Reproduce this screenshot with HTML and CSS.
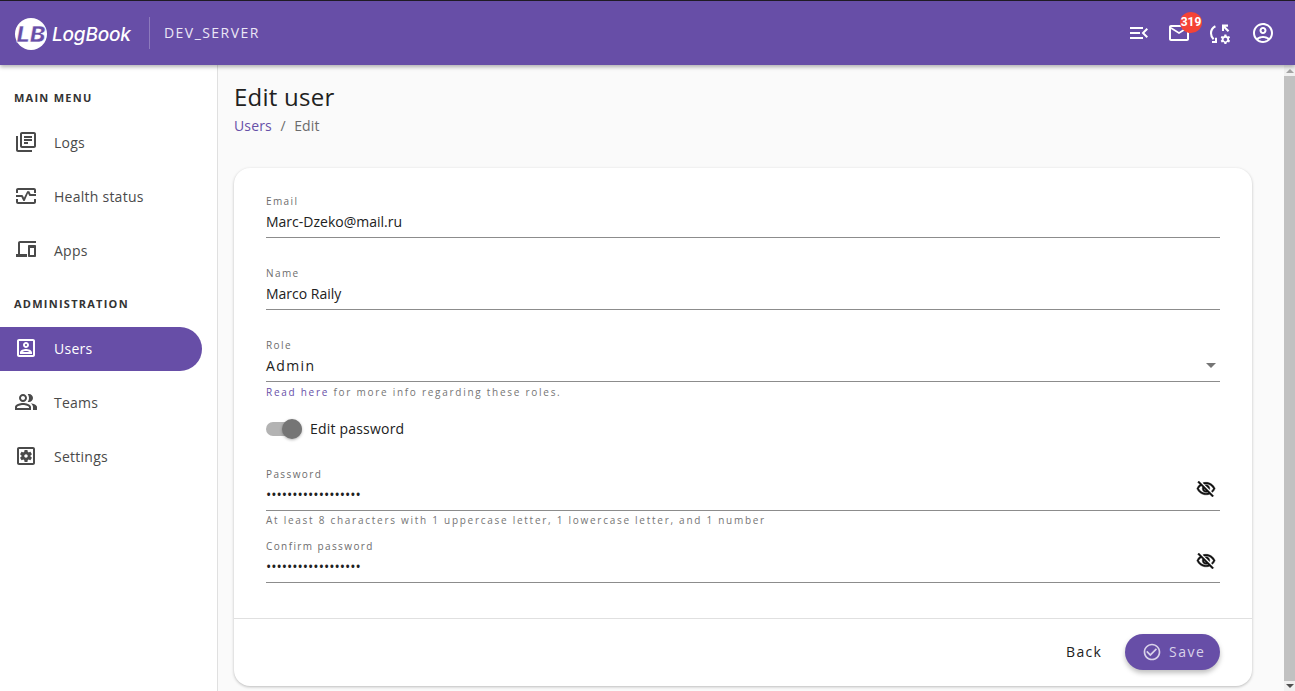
FILE: index.html
```html
<!DOCTYPE html>
<html lang="en">
<head>
    <meta charset="UTF-8">
    <meta name="viewport" content="width=device-width, initial-scale=1.0">
    <title>LogBook - Edit user</title>
    <link rel="stylesheet" href="styles.css">
</head>
<body>
    <header class="topbar">
        <div class="brand">
            <svg class="brand-mark" viewBox="0 0 36 36" width="36" height="36">
                <circle cx="18" cy="18" r="16" fill="#fff"/>
                <text x="18" y="26" class="brand-letters" textLength="29" lengthAdjust="spacingAndGlyphs">LB</text>
            </svg>
            <span class="brand-name">LogBook</span>
        </div>
        <div class="server">DEV_SERVER</div>
        <div class="topbar-actions">
            <button class="icon-btn">
                <svg class="icon" viewBox="0 0 24 24"><path d="M3 18h13v-2H3v2zm0-5h10v-2H3v2zm0-7v2h13V6H3zm18 9.59L17.42 12 21 8.41 19.59 7l-5 5 5 5L21 15.59z"/></svg>
            </button>
            <button class="icon-btn">
                <svg class="icon" viewBox="0 0 24 24"><path d="M20 4H4c-1.1 0-1.99.9-1.99 2L2 18c0 1.1.9 2 2 2h16c1.1 0 2-.9 2-2V6c0-1.1-.9-2-2-2zm0 14H4V8l8 5 8-5v10zm-8-7L4 6h16l-8 5z"/></svg>
                <span class="badge">319</span>
            </button>
            <button class="icon-btn icon-btn-sync">
                <svg class="icon" viewBox="0 0 24 24">
                    <path d="M7.4 5.2C4.6 6.6 3 9 3 12.2c0 2.4 1 4.5 2.6 6" fill="none" stroke="#fff" stroke-width="2.1"/>
                    <path d="M9 22H4v-2h3v-3.2h2z"/>
                    <path d="M14 3.6h6v2.1h-2.5l3.8 3.8-1.5 1.5-3.8-3.8V10H14z"/>
                    <path d="M18.4 13.4l.3 1.5c.4.1.7.3 1 .5l1.4-.5 1 1.7-1.1 1c.1.4.1.8 0 1.2l1.1 1-1 1.7-1.4-.5c-.3.2-.6.4-1 .5l-.3 1.5h-2l-.3-1.5c-.4-.1-.7-.3-1-.5l-1.4.5-1-1.7 1.1-1c-.1-.4-.1-.8 0-1.2l-1.1-1 1-1.7 1.4.5c.3-.2.6-.4 1-.5l.3-1.5zm-1 3.4c-1 0-1.8.8-1.8 1.8s.8 1.8 1.8 1.8 1.8-.8 1.8-1.8-.8-1.8-1.8-1.8z"/>
                </svg>
            </button>
            <button class="icon-btn">
                <svg class="icon" viewBox="0 0 24 24"><path d="M12 2C6.48 2 2 6.48 2 12s4.48 10 10 10 10-4.48 10-10S17.52 2 12 2zM7.35 18.5C8.66 17.56 10.26 17 12 17s3.34.56 4.65 1.5c-1.31.94-2.91 1.5-4.65 1.5s-3.34-.56-4.65-1.5zm10.79-1.38C16.45 15.8 14.32 15 12 15s-4.45.8-6.14 2.12C4.7 15.73 4 13.95 4 12c0-4.42 3.58-8 8-8s8 3.58 8 8c0 1.95-.7 3.73-1.86 5.12z M12 6c-1.93 0-3.5 1.57-3.5 3.5S10.07 13 12 13s3.5-1.57 3.5-3.5S13.93 6 12 6zm0 5c-.83 0-1.5-.67-1.5-1.5S11.17 8 12 8s1.5.67 1.5 1.5S12.83 11 12 11z"/></svg>
            </button>
        </div>
    </header>

    <div class="layout">
        <nav class="sidebar">
            <div class="nav-title">MAIN MENU</div>
            <a class="nav-item">
                <svg class="icon" viewBox="0 0 24 24"><path d="M4 6H2v14c0 1.1.9 2 2 2h14v-2H4V6zm16-4H8c-1.1 0-2 .9-2 2v12c0 1.1.9 2 2 2h12c1.1 0 2-.9 2-2V4c0-1.1-.9-2-2-2zm0 14H8V4h12v12zM10 9h8v2h-8zm0 3h4v2h-4zm0-6h8v2h-8z"/></svg>
                Logs
            </a>
            <a class="nav-item">
                <svg class="icon" viewBox="0 0 24 24"><path d="M20 4H4c-1.1 0-2 .9-2 2v3h2V6h16v3h2V6c0-1.1-.9-2-2-2zm0 14H4v-3H2v3c0 1.1.9 2 2 2h16c1.1 0 2-.9 2-2v-3h-2v3z"/><path d="M14.89 7.55c-.34-.68-1.45-.68-1.79 0L10 13.76l-1.11-2.21c-.17-.34-.51-.55-.89-.55H2v2h5.38l1.72 3.45c.18.34.52.55.9.55s.72-.21.89-.55L14 9.24l1.11 2.21c.17.34.51.55.89.55h6v-2h-5.38l-1.73-3.45z"/></svg>
                Health status
            </a>
            <a class="nav-item">
                <svg class="icon" viewBox="0 0 24 24"><path d="M4 5c0-1.1.9-2 2-2h16v2H6v11h7v3H2v-3h2V5z"/><path d="M15 7h6c.55 0 1 .45 1 1v10c0 .55-.45 1-1 1h-6c-.55 0-1-.45-1-1V8c0-.55.45-1 1-1zm1 3v7h4v-7h-4z"/></svg>
                Apps
            </a>
            <div class="nav-title nav-title-second">ADMINISTRATION</div>
            <a class="nav-item active">
                <svg class="icon" viewBox="0 0 24 24"><path d="M19 5v14H5V5h14m0-2H5c-1.1 0-2 .9-2 2v14c0 1.1.9 2 2 2h14c1.1 0 2-.9 2-2V5c0-1.1-.9-2-2-2zm-7 9c-1.65 0-3-1.35-3-3s1.35-3 3-3 3 1.35 3 3-1.35 3-3 3zm0-4c-.55 0-1 .45-1 1s.45 1 1 1 1-.45 1-1-.45-1-1-1zm6 10H6v-1.53c0-2.5 3.97-3.58 6-3.58s6 1.08 6 3.58V18zm-9.69-2h7.38c-.69-.56-2.38-1.12-3.69-1.12s-3.01.56-3.69 1.12z"/></svg>
                Users
            </a>
            <a class="nav-item">
                <svg class="icon" viewBox="0 0 24 24"><path d="M16.67 13.13C18.04 14.06 19 15.32 19 17v3h4v-3c0-2.18-3.57-3.47-6.33-3.87z"/><path d="M15 12c2.21 0 4-1.79 4-4s-1.79-4-4-4c-.47 0-.91.1-1.33.24C14.5 5.27 15 6.58 15 8s-.5 2.73-1.33 3.76c.42.14.86.24 1.33.24z"/><path d="M9 12c2.21 0 4-1.79 4-4s-1.79-4-4-4-4 1.79-4 4 1.79 4 4 4zm0-6c1.1 0 2 .9 2 2s-.9 2-2 2-2-.9-2-2 .9-2 2-2z"/><path d="M9 13c-2.67 0-8 1.34-8 4v3h16v-3c0-2.66-5.33-4-8-4zm6 5H3v-.99C3.2 16.29 6.3 15 9 15s5.8 1.29 6 2v1z"/></svg>
                Teams
            </a>
            <a class="nav-item">
                <svg class="icon" viewBox="0 0 24 24"><path d="M6.21 13.97l1.2 2.07c.08.13.23.18.37.13l1.49-.6c.31.24.64.44 1.01.59l.22 1.59c.03.14.15.25.3.25h2.4c.15 0 .27-.11.3-.25l.22-1.59c.36-.15.7-.35 1.01-.59l1.49.6c.14.05.29 0 .37-.13l1.2-2.07c.08-.13.04-.29-.07-.39l-1.27-.99c.03-.19.04-.39.04-.58 0-.2-.02-.39-.04-.59l1.27-.99c.11-.09.15-.26.07-.39l-1.2-2.07c-.08-.13-.23-.18-.37-.13l-1.49.6c-.31-.24-.64-.44-1.01-.59l-.22-1.59c-.03-.14-.15-.25-.3-.25h-2.4c-.15 0-.27.11-.3.25l-.22 1.59c-.36.15-.71.34-1.01.58l-1.49-.6c-.14-.05-.29 0-.37.13l-1.2 2.07c-.08.13-.04.29.07.39l1.27.99c-.03.2-.05.39-.05.59 0 .2.02.39.04.59l-1.27.99c-.11.1-.14.26-.06.39zM12 10.29c.94 0 1.71.77 1.71 1.71s-.77 1.71-1.71 1.71-1.71-.77-1.71-1.71.77-1.71 1.71-1.71zM19 3H5c-1.11 0-2 .9-2 2v14c0 1.1.89 2 2 2h14c1.11 0 2-.9 2-2V5c0-1.1-.89-2-2-2zm0 16H5V5h14v14z"/></svg>
                Settings
            </a>
        </nav>

        <main class="content">
            <h1 class="page-title">Edit user</h1>
            <div class="breadcrumb">
                <a class="link">Users</a>
                <span class="sep">/</span>
                <span>Edit</span>
            </div>

            <section class="card">
                <form class="card-body">
                    <div class="field">
                        <label class="field-label">Email</label>
                        <div class="field-value">Marc-Dzeko@mail.ru</div>
                    </div>
                    <div class="field">
                        <label class="field-label">Name</label>
                        <div class="field-value">Marco Raily</div>
                    </div>
                    <div class="field field-role">
                        <label class="field-label">Role</label>
                        <div class="field-value spaced">
                            Admin
                            <span class="caret"></span>
                        </div>
                        <p class="helper"><a class="link">Read here</a> for more info regarding these roles.</p>
                    </div>
                    <div class="switch-row">
                        <span class="switch"><span class="switch-thumb"></span></span>
                        Edit password
                    </div>
                    <div class="field field-password">
                        <label class="field-label">Password</label>
                        <div class="field-value dots">
                            ••••••••••••••••••
                            <svg class="icon eye" viewBox="0 0 24 24"><path d="M12 6c3.79 0 7.17 2.13 8.82 5.5-.59 1.22-1.42 2.27-2.41 3.12l1.41 1.41c1.39-1.23 2.49-2.77 3.18-4.53C21.27 7.11 17 4 12 4c-1.27 0-2.49.2-3.64.57l1.65 1.65C10.66 6.09 11.32 6 12 6zm-1.07 1.14L13 9.21c.57.25 1.03.71 1.28 1.28l2.07 2.07c.08-.34.14-.7.14-1.07C16.5 9.01 14.48 7 12 7c-.37 0-.72.05-1.07.14zM2.01 3.87l2.68 2.68C3.06 7.83 1.77 9.53 1 11.5 2.73 15.89 7 19 12 19c1.52 0 2.98-.29 4.32-.82l3.42 3.42 1.41-1.41L3.42 2.45 2.01 3.87zm7.5 7.5l2.61 2.61c-.04.01-.08.02-.12.02-1.38 0-2.5-1.12-2.5-2.5 0-.05.01-.08.01-.13zm-3.4-3.4l1.75 1.75c-.23.55-.36 1.15-.36 1.78 0 2.48 2.02 4.5 4.5 4.5.63 0 1.23-.13 1.77-.36l.98.98c-.88.24-1.8.38-2.75.38-3.79 0-7.17-2.13-8.82-5.5.7-1.43 1.72-2.61 2.93-3.53z"/></svg>
                        </div>
                        <p class="helper">At least 8 characters with 1 uppercase letter, 1 lowercase letter, and 1 number</p>
                    </div>
                    <div class="field field-confirm">
                        <label class="field-label">Confirm password</label>
                        <div class="field-value dots">
                            ••••••••••••••••••
                            <svg class="icon eye" viewBox="0 0 24 24"><path d="M12 6c3.79 0 7.17 2.13 8.82 5.5-.59 1.22-1.42 2.27-2.41 3.12l1.41 1.41c1.39-1.23 2.49-2.77 3.18-4.53C21.27 7.11 17 4 12 4c-1.27 0-2.49.2-3.64.57l1.65 1.65C10.66 6.09 11.32 6 12 6zm-1.07 1.14L13 9.21c.57.25 1.03.71 1.28 1.28l2.07 2.07c.08-.34.14-.7.14-1.07C16.5 9.01 14.48 7 12 7c-.37 0-.72.05-1.07.14zM2.01 3.87l2.68 2.68C3.06 7.83 1.77 9.53 1 11.5 2.73 15.89 7 19 12 19c1.52 0 2.98-.29 4.32-.82l3.42 3.42 1.41-1.41L3.42 2.45 2.01 3.87zm7.5 7.5l2.61 2.61c-.04.01-.08.02-.12.02-1.38 0-2.5-1.12-2.5-2.5 0-.05.01-.08.01-.13zm-3.4-3.4l1.75 1.75c-.23.55-.36 1.15-.36 1.78 0 2.48 2.02 4.5 4.5 4.5.63 0 1.23-.13 1.77-.36l.98.98c-.88.24-1.8.38-2.75.38-3.79 0-7.17-2.13-8.82-5.5.7-1.43 1.72-2.61 2.93-3.53z"/></svg>
                        </div>
                    </div>
                </form>
                <footer class="card-footer">
                    <button class="btn-text">Back</button>
                    <button class="btn-save">
                        <svg class="icon" viewBox="0 0 24 24"><path d="M16.59 7.58 10 14.17l-3.59-3.58L5 12l5 5 8-8zM12 2C6.48 2 2 6.48 2 12s4.48 10 10 10 10-4.48 10-10S17.52 2 12 2zm0 18c-4.42 0-8-3.58-8-8s3.58-8 8-8 8 3.58 8 8-3.58 8-8 8z"/></svg>
                        Save
                    </button>
                </footer>
            </section>
        </main>

        <div class="scrollbar">
            <span class="arrow-up"></span>
            <span class="scroll-thumb"></span>
            <span class="arrow-down"></span>
        </div>
    </div>
</body>
</html>
```

FILE: styles.css
```css
* {
    box-sizing: border-box;
}

html, body {
    height: 100%;
}

body {
    margin: 0;
    display: flex;
    flex-direction: column;
    overflow: hidden;
    background: #fafafa;
    color: #212121;
    font-family: 'Open Sans', sans-serif;
    font-size: 14px;
}

.icon {
    display: block;
    width: 24px;
    height: 24px;
    fill: currentColor;
    flex-shrink: 0;
}

.link {
    color: #6750a8;
}

/* Top bar */
.topbar {
    position: relative;
    z-index: 3;
    flex: 0 0 65px;
    display: flex;
    align-items: center;
    padding-left: 13px;
    padding-right: 20px;
    background: #674ea7;
    border-top: 1px solid #1f1b24;
    color: #fff;
    box-shadow: 0 2px 4px rgba(0, 0, 0, 0.3);
}

.brand {
    display: flex;
    align-items: center;
    width: 137px;
    height: 32px;
    border-right: 1px solid rgba(255, 255, 255, 0.25);
}

.brand-mark {
    margin-top: 2px;
    margin-right: 3px;
}

.brand-letters {
    font-family: 'Inter', sans-serif;
    font-size: 22px;
    font-weight: 800;
    font-style: italic;
    fill: #674ea7;
    stroke: #fff;
    stroke-width: 0.5px;
    text-anchor: middle;
}

.brand-name {
    margin-top: 3px;
    font-family: 'Inter', sans-serif;
    font-size: 19px;
    font-weight: 500;
    font-style: italic;
    letter-spacing: -0.2px;
}

.server {
    margin-left: 14px;
    margin-bottom: 2px;
    font-size: 14px;
    letter-spacing: 1.45px;
    color: #ece7f6;
}

.topbar-actions {
    margin-left: auto;
    display: flex;
    gap: 16px;
}

.icon-btn {
    position: relative;
    padding: 0;
    border: none;
    background: none;
    color: #fff;
}

.icon-btn-sync {
    margin: 0 3px 0 1px;
}

.badge {
    position: absolute;
    top: -9px;
    left: 13px;
    width: 22px;
    height: 21px;
    border-radius: 50%;
    background: #f44336;
    font-family: 'Roboto', sans-serif;
    font-size: 12px;
    font-weight: 700;
    line-height: 21px;
    text-align: center;
}

/* Layout */
.layout {
    flex: 1;
    display: flex;
    min-height: 0;
}

.sidebar {
    flex: 0 0 218px;
    padding-top: 26px;
    padding-right: 15px;
    background: #fff;
    border-right: 1px solid #e0e0e0;
}

.nav-title {
    height: 14px;
    margin-bottom: 15px;
    padding-left: 14px;
    font-size: 11px;
    font-weight: 700;
    line-height: 14px;
    letter-spacing: 1.25px;
    color: #333;
}

.nav-title-second {
    margin-top: 25px;
    margin-bottom: 16px;
}

.nav-item {
    display: flex;
    align-items: center;
    gap: 16px;
    height: 44px;
    margin-bottom: 10px;
    padding-left: 14px;
    border-radius: 0 22px 22px 0;
    color: #4a4a4a;
    font-size: 14px;
    letter-spacing: 0.25px;
}

.nav-item .icon {
    margin-top: -1px;
}

.nav-item.active {
    margin-bottom: 9px;
    padding-bottom: 2px;
    background: #674ea7;
    color: #fff;
}

/* Content */
.content {
    flex: 1;
    min-width: 0;
    padding: 15px 32px 0 16px;
    background: #fafafa;
}

.page-title {
    margin: 0;
    padding-top: 1px;
    font-size: 24px;
    font-weight: 400;
    line-height: 32px;
    letter-spacing: 0.25px;
    color: #212121;
}

.breadcrumb {
    display: flex;
    gap: 8.5px;
    margin-top: 3px;
    color: #6b6b6b;
    font-size: 14px;
    line-height: 20px;
    letter-spacing: 0.15px;
}

.card {
    margin-top: 32px;
    height: 518px;
    display: flex;
    flex-direction: column;
    background: #fff;
    border-radius: 16px;
    box-shadow: 0 1px 3px rgba(0, 0, 0, 0.25);
}

.card-body {
    flex: 1;
    padding: 26px 32px 0;
    border-bottom: 1px solid #e0e0e0;
}

.field {
    height: 72px;
}

.field-label {
    display: block;
    height: 14px;
    font-size: 10px;
    line-height: 14px;
    letter-spacing: 1.4px;
    color: #6d6d6d;
}

.field-value {
    position: relative;
    height: 30px;
    padding-top: 4px;
    border-bottom: 1px solid #8c8c8c;
    font-size: 14px;
    line-height: 20px;
    color: #212121;
}

.spaced {
    letter-spacing: 1.4px;
}

.dots {
    letter-spacing: 0;
}

.caret {
    position: absolute;
    right: 4px;
    top: 11px;
    width: 0;
    height: 0;
    border-left: 5px solid transparent;
    border-right: 5px solid transparent;
    border-top: 5px solid #757575;
}

.eye {
    position: absolute;
    right: 4px;
    top: -2px;
    width: 20px;
    height: 20px;
    color: #111;
    stroke: #111;
    stroke-width: 0.5px;
}

.helper {
    margin: 3px 0 0;
    font-size: 10px;
    line-height: 14px;
    letter-spacing: 1.73px;
    color: #757575;
}

.field-role {
    height: 70px;
}

.switch-row {
    display: flex;
    align-items: center;
    gap: 8px;
    height: 24px;
    margin-top: 8px;
    margin-bottom: 27px;
    font-size: 14px;
    letter-spacing: 0.2px;
}

.switch {
    position: relative;
    width: 36px;
    height: 14px;
    margin-top: 1px;
    border-radius: 7px;
    background: #b3b3b3;
}

.switch-thumb {
    position: absolute;
    right: 0;
    top: -3px;
    width: 20px;
    height: 20px;
    border-radius: 50%;
    background: #757575;
    box-shadow: 0 1px 3px rgba(0, 0, 0, 0.3);
}

.field-password .helper {
    margin-top: 2px;
}

.card-footer {
    flex: 0 0 67px;
    display: flex;
    align-items: center;
    justify-content: flex-end;
    gap: 23px;
    padding-right: 32px;
    padding-bottom: 2px;
}

.btn-text {
    padding: 0;
    border: none;
    background: none;
    color: #212121;
    font-family: inherit;
    font-size: 14px;
    letter-spacing: 1.25px;
}

.btn-save {
    display: flex;
    align-items: center;
    gap: 7px;
    width: 95px;
    height: 36px;
    padding: 0 0 0 17px;
    border: none;
    border-radius: 18px;
    background: #674ea7;
    color: #d9d2ea;
    font-family: inherit;
    font-size: 14px;
    letter-spacing: 1.5px;
    box-shadow: 0 3px 5px rgba(0, 0, 0, 0.25);
}

.btn-save .icon {
    width: 20px;
    height: 20px;
}

/* Scrollbar */
.scrollbar {
    flex: 0 0 11px;
    display: flex;
    flex-direction: column;
    align-items: center;
    background: #f1f1f1;
}

.scroll-thumb {
    flex: 1;
    width: 100%;
    margin: 3px 0;
    background: #c1c1c1;
}

.arrow-up,
.arrow-down {
    flex: 0 0 0;
    width: 0;
    height: 0;
    border-left: 4px solid transparent;
    border-right: 4px solid transparent;
}

.arrow-up {
    border-bottom: 4px solid #a3a3a3;
    margin-top: 4px;
}

.arrow-down {
    border-top: 4px solid #505050;
    margin-bottom: 3px;
}
```
